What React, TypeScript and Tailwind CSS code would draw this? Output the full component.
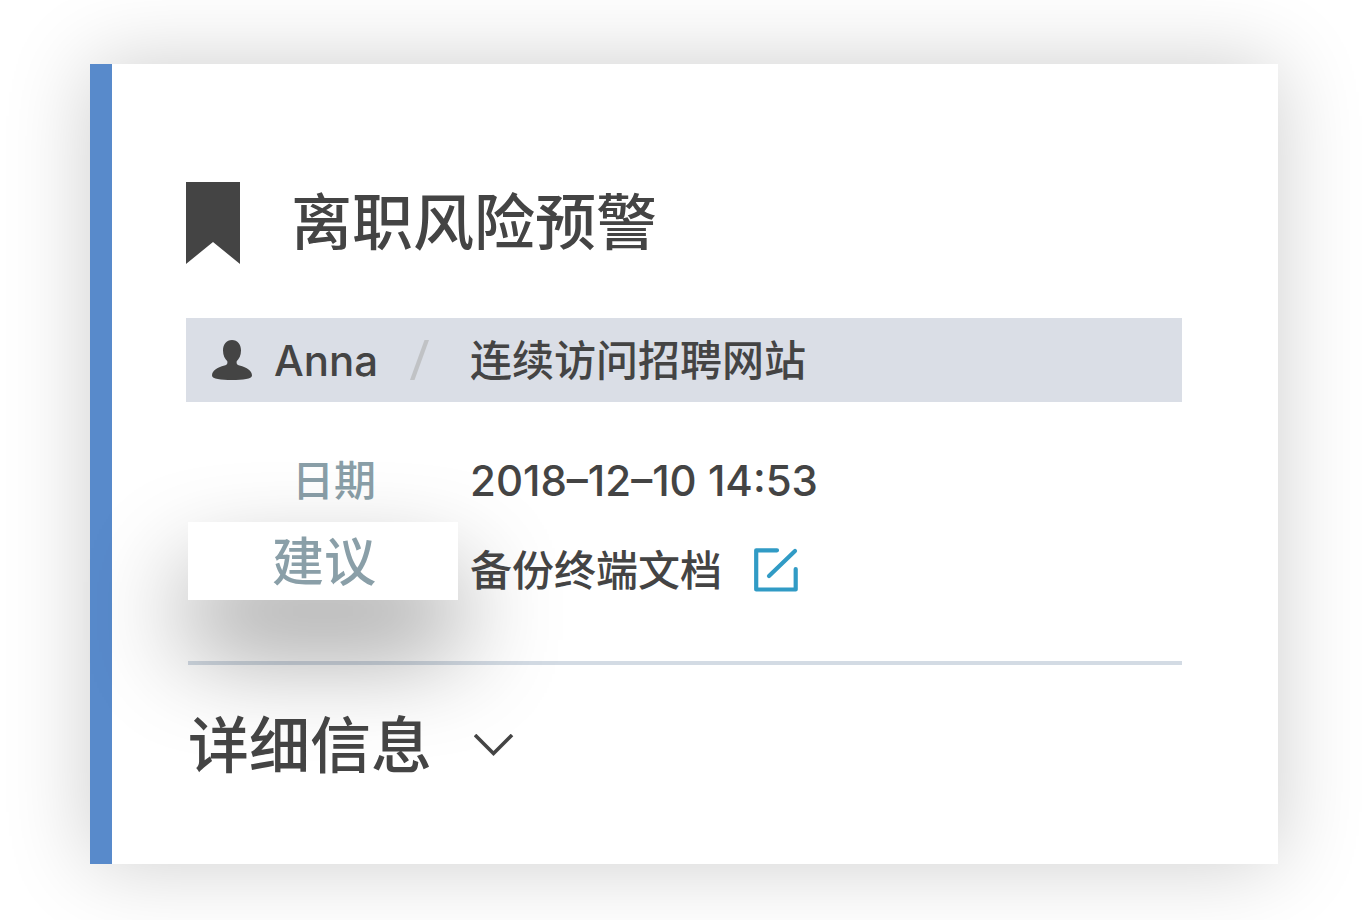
function BookmarkIcon() {
  return (
    <svg className="h-[82px] w-[55px] shrink-0" viewBox="0 0 55 82" aria-hidden="true">
      <path d="M0 0H54V82L27 60L0 82Z" fill="#444" />
    </svg>
  );
}

function PersonIcon() {
  return (
    <svg className="h-10 w-10 shrink-0" viewBox="0 0 40 40" aria-hidden="true">
      <path
        d="M20 0C25.600 0 29 4.200 29 10.500C29 15.500 27 19 24.700 21.200C24.200 23.800 25 24.700 27.500 25.500C35 27.700 40 30.500 40 35.500C40 39 31 40 20 40C9 40 0 39 0 35.500C0 30.500 5 27.700 12.500 25.500C15 24.700 15.800 23.800 15.300 21.200C13 19 11 15.500 11 10.500C11 4.200 14.400 0 20 0Z"
        fill="#444"
      />
    </svg>
  );
}

function EditIcon() {
  return (
    <svg className="size-11" viewBox="0 0 44 44" fill="none" stroke="#319bc5" strokeWidth="4.200" strokeLinecap="round" strokeLinejoin="round" aria-hidden="true">
      <path d="M23 2.300H2.200V41.500H41.700V21" />
      <path d="M15 28L41 3" />
    </svg>
  );
}

function ChevronIcon() {
  return (
    <svg className="h-6 w-10" viewBox="0 0 40 24" fill="none" stroke="#444" strokeWidth="3.600" aria-hidden="true">
      <path d="M1 1L19.500 19.500L38 1" />
    </svg>
  );
}

export default function App() {
  return (
    <main className="flex min-h-screen flex-col bg-white pt-16 pr-[89px] pb-14 pl-[90px] font-['Inter','Noto_Sans_CJK_SC',sans-serif] font-medium text-[#444]">
      <article className="flex-1 border-l-[22px] border-[#588acb] bg-white pt-[118px] pr-24 pb-16 pl-[74px] shadow-[0_0_80px_rgba(0,0,0,0.2)]">
        <header className="flex items-center gap-[50px]">
          <BookmarkIcon />
          <h1 className="text-[61px] leading-[82px]">离职风险预警</h1>
        </header>

        <div className="mt-[54px] flex h-[84px] items-center bg-[#dadee6] text-[42px]">
          <div className="flex w-[284px] shrink-0 items-center pl-[26px]">
            <PersonIcon />
            <span className="ml-[22px]">Anna</span>
            <svg className="ml-8 h-10 w-5" viewBox="0 0 20 40" aria-hidden="true">
              <path d="M14.500 0H19L4.500 40H0Z" fill="#c0c2c5" />
            </svg>
          </div>
          <span>连续访问招聘网站</span>
        </div>

        <dl className="mt-12 text-[42px]">
          <div className="flex h-[60px] items-center">
            <dt className="w-[284px] shrink-0 pr-[94px] text-right text-[#8a9fa8]">日期</dt>
            <dd className="relative z-10">2018–12–10 14:53</dd>
          </div>
          <div className="mt-3 flex h-[78px] items-center">
            <dt className="mr-3 ml-0.5 w-[270px] shrink-0 bg-white pt-1 pr-[82px] text-right text-[52px] leading-[74px] text-[#8a9fa8] shadow-[0_50px_100px_rgba(0,0,0,0.42)]">
              建议
            </dt>
            <dd className="relative z-10 flex items-center gap-8 pt-[18px]">
              <span>备份终端文档</span>
              <button type="button" aria-label="编辑" className="cursor-pointer">
                <EditIcon />
              </button>
            </dd>
          </div>
        </dl>

        <hr className="mt-[61px] ml-0.5 border-t-4 border-[#d3dbe4]" />

        <button type="button" className="relative z-10 mt-[39px] ml-0.5 flex cursor-pointer items-center gap-[42px] text-[61px] leading-[84px]">
          <span>详细信息</span>
          <ChevronIcon />
        </button>
      </article>
    </main>
  );
}
